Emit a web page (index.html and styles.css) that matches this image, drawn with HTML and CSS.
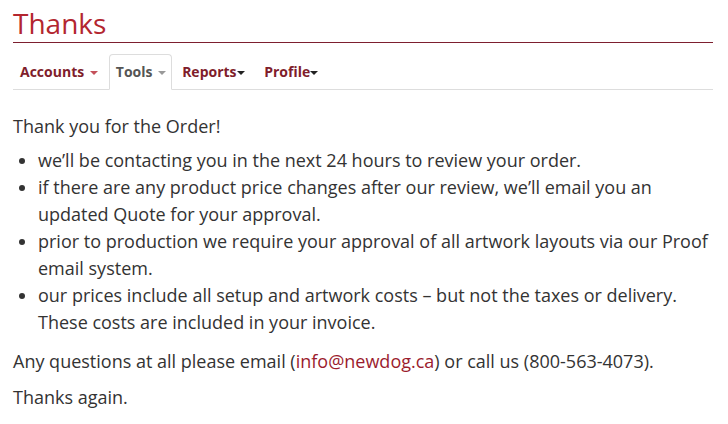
FILE: index.html
```html
<!DOCTYPE html>
<html lang="en">
<head>
  <meta charset="utf-8">
  <meta name="viewport" content="width=device-width, initial-scale=1.0">
  <title>Thanks</title>
  <link rel="stylesheet" href="styles.css">
</head>
<body>

  <div class="page">
    <h1 class="page-title">Thanks</h1>

    <!-- Account navigation -->
    <ul class="nav-tabs">
      <li class="first"><a href="#">Accounts <span class="caret"></span></a></li>
      <li class="active"><a href="#">Tools <span class="caret"></span></a></li>
      <li><a href="#">Reports<span class="caret dark"></span> </a></li>
      <li><a href="#">Profile<span class="caret dark"></span> </a></li>
    </ul>

    <div class="content">
      <p class="lead">Thank you for the Order!</p>
      <ul class="notes">
        <li>we’ll be contacting you in the next 24 hours to review your order.</li>
        <li>if there are any product price changes after our review, we’ll email you an updated Quote for your approval.</li>
        <li>prior to production we require your approval of all artwork layouts via our Proof email system.</li>
        <li>our prices include all setup and artwork costs – but not the taxes or delivery. These costs are included in your invoice.</li>
      </ul>
      <p>Any questions at all please email (<a href="mailto:info@newdog.ca">info@newdog.ca</a>) or call us (800-563-4073).</p>
      <p>Thanks again.</p>
    </div>
  </div>

</body>
</html>
```

FILE: styles.css
```css
body { margin: 0; background: #fff; font-family: "Open Sans", sans-serif; color: #333; }
.page { width: 700px; padding: 0 13px; }
.page-title { margin: 0; padding-top: 4px; font-size: 28px; font-weight: normal; line-height: 38px; color: #b3262f; border-bottom: 1px solid #7d1f2f; }

.nav-tabs { list-style: none; margin: 11px 0 0; padding: 0; display: flex; border-bottom: 1px solid #ddd; }
.nav-tabs li { margin-bottom: -1px; margin-right: 3px; }
.nav-tabs li.first { margin-right: 5px; }
.nav-tabs a { display: block; padding: 7px 5px 7px 6px; line-height: 20px; font-size: 14px; font-weight: bold; color: #7f1d2b; text-decoration: none; white-space: pre; border: 1px solid transparent; border-radius: 4px 4px 0 0; }
.nav-tabs li.active a { color: #555; background: #fff; border-color: #ddd #ddd transparent; }
.caret { display: inline-block; width: 0; height: 0; margin-left: 2px; vertical-align: middle; border-top: 4px solid; border-left: 4px solid transparent; border-right: 4px solid transparent; color: #c4505a; }
.caret.dark { color: #222; margin-left: 0; }
.nav-tabs li.active .caret { color: #999; }

.content { padding-top: 23px; font-size: 18px; line-height: 27px; }
.content p { margin: 0 0 9px; }
.content p.lead { margin-bottom: 7px; }
.notes { margin: 0 0 12px; padding-left: 25px; }
.content a { color: #9b1c2e; text-decoration: none; }
```
